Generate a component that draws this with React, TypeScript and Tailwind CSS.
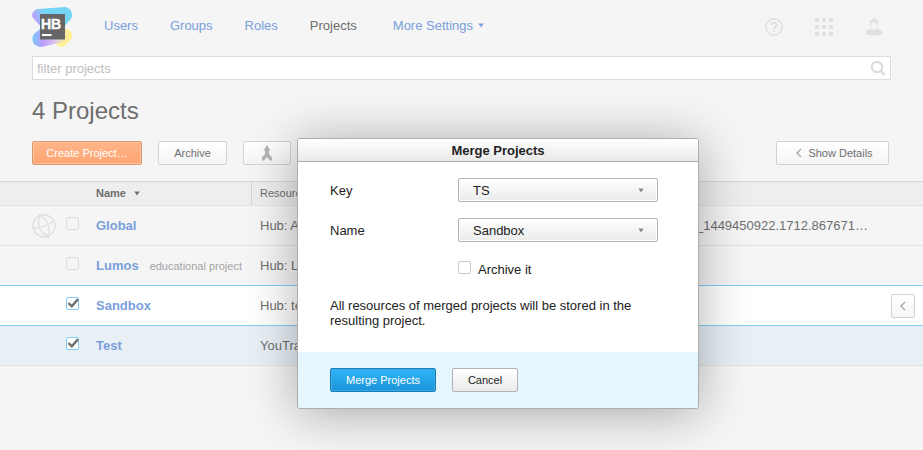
import React from "react";

const projects = [
  { name: "Global", note: "", resource: "Hub: All", extra: "_1449450922.1712.867671…", checked: false, global: true, focused: false },
  { name: "Lumos", note: "educational project", resource: "Hub: Lu", extra: "", checked: false, global: false, focused: false },
  { name: "Sandbox", note: "", resource: "Hub: test", extra: "", checked: true, global: false, focused: true },
  { name: "Test", note: "", resource: "YouTrack", extra: "", checked: true, global: false, focused: false },
];

function Logo() {
  return (
    <svg width="40" height="40" viewBox="0 0 40 40" role="img" aria-label="Hub">
      <defs>
        <linearGradient id="top" x1="0" y1="13" x2="13" y2="6" gradientUnits="userSpaceOnUse">
          <stop offset="0" stopColor="#c79bff" />
          <stop offset="0.4" stopColor="#a9b0fb" />
          <stop offset="1" stopColor="#75d5f5" />
        </linearGradient>
        <linearGradient id="bottom" x1="0" y1="28" x2="38" y2="30" gradientUnits="userSpaceOnUse">
          <stop offset="0" stopColor="#77c9fa" />
          <stop offset="0.3" stopColor="#bb9dfb" />
          <stop offset="0.6" stopColor="#dcc3ee" />
          <stop offset="0.85" stopColor="#fbeaa0" />
        </linearGradient>
      </defs>
      <path d="M28 24L36 23C40 23 41 29 39 32L33 38.500C31 40.300 28 40.300 26 38.500L22 34Z" fill="#fff192" />
      <path d="M8 22L2 27C-2 33 2 40 9 40L32 35C35 34 36 33 36 30V22Z" fill="url(#bottom)" />
      <path d="M6 2L33 0C40 1 42 9 38 13L31 21L9 20L2 12C-2 8 1 3 6 2Z" fill="url(#top)" />
      <rect x="8" y="7" width="25" height="25.500" fill="#666" />
      <text x="9" y="21.500" fontSize="14" fontWeight="700" fill="#fff" stroke="#fff" strokeWidth="0.400" fontFamily="Liberation Sans, sans-serif">HB</text>
      <rect x="10" y="27" width="9.500" height="2" fill="#fff" />
    </svg>
  );
}

function Caret({ className }: { className: string }) {
  return (
    <svg width="6" height="5" viewBox="0 0 6 5" className={className} aria-hidden="true">
      <path d="M0.300 0.500H5.700L3 4.500Z" fill="currentColor" />
    </svg>
  );
}

function ChevronLeft() {
  return (
    <svg width="6" height="10" viewBox="0 0 6 10" fill="none" stroke="#aaa" strokeWidth="1.4" aria-hidden="true">
      <path d="M5 1L1 5L5 9" />
    </svg>
  );
}

function Checkbox({ label, checked = false, id }: { label?: string; checked?: boolean; id?: string }) {
  return (
    <span className="inline-grid">
      <input
        id={id}
        type="checkbox"
        aria-label={label}
        defaultChecked={checked}
        className="peer col-start-1 row-start-1 size-[13px] appearance-none rounded-xs border border-[#dcdcdc] bg-transparent checked:border-[#80cdf7] checked:bg-white in-[form]:border-[#c8c8c8]"
      />
      <svg
        width="13"
        height="13"
        viewBox="0 0 13 13"
        fill="none"
        stroke="#6b6b6b"
        strokeWidth="2.4"
        className="pointer-events-none invisible col-start-1 row-start-1 peer-checked:visible"
        aria-hidden="true"
      >
        <path d="M2.5 6L5.800 9.300L12 2.300" />
      </svg>
    </span>
  );
}

function Field({ id, label, value, options }: { id: string; label: string; value: string; options: string[] }) {
  return (
    <div className="flex items-center">
      <label htmlFor={id} className="w-32">{label}</label>
      <div className="grid w-[200px] items-center">
        <select
          id={id}
          defaultValue={value}
          className="col-start-1 row-start-1 h-6 appearance-none rounded-xs border border-[#b3b3b3] bg-linear-to-b from-white to-[#ebebeb] pl-[14px] text-[#222] shadow-[inset_0_0_0_1px_#fff]"
        >
          {options.map((o) => <option key={o}>{o}</option>)}
        </select>
        <Caret className="pointer-events-none col-start-1 row-start-1 mr-[14px] justify-self-end text-[#8c8c8c]" />
      </div>
    </div>
  );
}

const lightButton =
  "flex h-6 items-center justify-center rounded-xs border border-[#d2d2d2] bg-linear-to-b from-white to-[#f5f5f5] text-[11px]";
const navLink = "text-[#7aa0dc]";

export default function App() {
  return (
    <div className="relative min-h-screen overflow-hidden bg-[#f5f5f5] font-['Liberation_Sans',Arial,sans-serif] text-[13px] leading-[15px] text-[#6e6e6e]">
      <header className="flex h-14 items-center pr-10 pb-[2px] pl-8">
        <Logo />
        <nav className="ml-8 flex flex-1 gap-8 pb-[3px]">
          <a href="#users" className={navLink}>Users</a>
          <a href="#groups" className={navLink}>Groups</a>
          <a href="#roles" className={navLink}>Roles</a>
          <a href="#projects" aria-current="page">Projects</a>
          <button type="button" className="ml-1 flex items-center gap-[5px] text-[#7aa0dc]">
            More Settings <Caret className="" />
          </button>
        </nav>
        <div className="flex items-center gap-8 text-[#dfdfdf]">
          <button type="button" aria-label="Help">
            <svg width="18" height="18" viewBox="0 0 18 18" fill="none" stroke="currentColor">
              <circle cx="9" cy="9" r="8.2" strokeWidth="1.6" />
              <path d="M6.4 7.2C6.4 3.9 11.7 3.9 11.7 7C11.7 9 9.1 8.8 9.1 11.2" strokeWidth="1.9" />
              <path d="M9.1 12.2V14" strokeWidth="2" />
            </svg>
          </button>
          <button type="button" aria-label="Services">
            <svg width="18" height="18" viewBox="0 0 18 18" fill="currentColor">
              <path d="M0 0h4v4H0zM7 0h4v4H7zM14 0h4v4h-4zM0 7h4v4H0zM7 7h4v4H7zM14 7h4v4h-4zM0 14h4v4H0zM7 14h4v4H7zM14 14h4v4h-4z" />
            </svg>
          </button>
          <button type="button" aria-label="Profile">
            <svg width="18" height="18" viewBox="0 0 18 18">
              <path d="M1 15C1 12 3.500 11 6 11L9 12.500L12 11C14.500 11 17 12 17 15C17 17.500 13 17.200 9 17.200C5 17.200 1 17.500 1 15Z" fill="currentColor" />
              <path d="M5.3 5C5.3 2.3 6.7 1.2 9 1.2C11.3 1.2 12.7 2.3 12.7 5C12.7 8 11 11.500 9 11.500C7 11.500 5.3 8 5.3 5Z" fill="#f5f5f5" stroke="currentColor" />
              <path d="M5 6C4.700 2 6.500 1 9 1C11.5 1 13.300 2 13 6C12.2 4.5 11 4.8 9 4.6C7 4.8 5.8 4.5 5 6Z" fill="currentColor" />
            </svg>
          </button>
        </div>
      </header>

      <main>
        <div className="mx-8 flex h-6 items-center border border-[#dcdcdc] bg-white pr-1">
          <input
            type="text"
            aria-label="Filter projects"
            placeholder="filter projects"
            className="min-w-0 flex-1 pl-1 outline-none placeholder:text-[#bebebe]"
          />
          <button type="button" aria-label="Search">
            <svg width="16" height="16" viewBox="0 0 16 16" fill="none" stroke="#dcdcdc">
              <circle cx="7" cy="7" r="5.2" strokeWidth="2.2" />
              <path d="M10.8 10.8L14.8 14.8" strokeWidth="2.6" />
            </svg>
          </button>
        </div>

        <h1 className="mx-8 mt-4 text-2xl leading-[30px]">4 Projects</h1>

        <div className="mt-[15px] flex gap-4 pr-[34px] pl-8">
          <button type="button" className="h-6 w-[110px] rounded-xs border border-[#d99a72] bg-linear-to-b from-[#ffb588] to-[#ffa473] text-[11px] text-white shadow-[inset_0_0_0_1px_#ffc09a]">
            Create Project…
          </button>
          <button type="button" className={`${lightButton} w-[69px]`}>Archive</button>
          <button type="button" aria-label="Merge" className={`${lightButton} w-12`}>
            <svg width="12" height="16" viewBox="0 0 12 16" fill="#b4b4b4">
              <path d="M6 0L9.500 5.500H8V9L11 12.500V15.500H9L6 12L3 15.500H1V12.500L4 9V5.500H2.500Z" />
            </svg>
          </button>
          <button type="button" className={`${lightButton} ml-auto w-[113px] gap-[6px] pl-1`}>
            <ChevronLeft /> Show Details
          </button>
        </div>

        <table className="mt-4 w-full table-fixed border-separate border-spacing-0">
          <colgroup>
            <col className="w-24" />
            <col className="w-[155px]" />
            <col />
            <col className="w-8" />
          </colgroup>
          <thead>
            <tr className="h-6 bg-[#eeeeee] text-left text-[11px] leading-[13px] *:border-t *:border-[#d6d6d6] *:p-0">
              <td></td>
              <th scope="col">
                <span className="flex items-center gap-2">Name <Caret className="" /></span>
              </th>
              <th scope="col" className="font-normal">
                <span className="flex h-[23px] items-center border-l border-[#d6d6d6] pl-2">Resources</span>
              </th>
              <td></td>
            </tr>
          </thead>
          <tbody>
            {projects.map((p) => (
              <tr
                key={p.name}
                className={
                  p.focused
                    ? "h-10 bg-white *:border-t *:border-[#80cdf7] *:p-0"
                    : p.checked
                      ? "h-[41px] bg-[#e8f0f6] *:border-y *:border-t-[#80cdf7] *:border-b-[#e2e2e2] *:p-0"
                      : "h-10 *:border-t *:border-[#e2e2e2] *:p-0"
                }
              >
                <td>
                  <div className="flex items-center justify-end pr-[17px]">
                    {p.global && (
                      <svg width="24" height="24" viewBox="0 0 24 24" fill="none" stroke="#dfdfdf" strokeWidth="1.3" className="mr-[10px]" aria-hidden="true">
                        <circle cx="12" cy="12" r="11" />
                        <path d="M8 1.5C4 9 8 19 16 22M8 1.5C15 5 19 14 16 22M1.5 14.5C8 14 15 11 21.5 7.5" />
                        <circle cx="8" cy="1.8" r="1.2" fill="#dfdfdf" />
                        <circle cx="16" cy="22" r="1.2" fill="#dfdfdf" />
                      </svg>
                    )}
                    <span className="flex pb-1">
                      <Checkbox label={`Select ${p.name}`} checked={p.checked} />
                    </span>
                  </div>
                </td>
                <td className="whitespace-nowrap">
                  <a href="#project" className="font-bold text-[#7aa0dc]">{p.name}</a>
                  {p.note && <span className="ml-[11px] text-[11px] text-[#a3a3a3]">{p.note}</span>}
                </td>
                <td>
                  <div className="flex justify-between pr-[23px] pl-[9px]">
                    <span>{p.resource}</span>
                    <span>{p.extra}</span>
                  </div>
                </td>
                <td>
                  {p.focused && (
                    <button type="button" aria-label="Show project details" className={`${lightButton} w-6`}>
                      <ChevronLeft />
                    </button>
                  )}
                </td>
              </tr>
            ))}
          </tbody>
        </table>
      </main>

      <section
        role="dialog"
        aria-labelledby="merge-title"
        className="absolute top-[138px] left-[297px] w-[402px] overflow-hidden rounded-[3px] border border-[#adadad] bg-white text-[#222] shadow-[0_4px_50px_rgba(0,0,0,0.32)]"
      >
        <h2 id="merge-title" className="border-b border-[#adadad] bg-linear-to-b from-white to-[#e9e9e9] pt-1 pb-[3px] text-center font-bold">
          Merge Projects
        </h2>
        <form>
          <div className="flex flex-col gap-4 px-8 pt-4 pb-6">
            <Field id="key" label="Key" value="TS" options={["TS", "SB"]} />
            <Field id="name" label="Name" value="Sandbox" options={["Sandbox", "Test"]} />
            <div className="ml-32 flex h-6 items-start gap-[7px] pt-[3px]">
              <Checkbox id="archive" />
              <label htmlFor="archive" className="pt-px">Archive it</label>
            </div>
            <p>All resources of merged projects will be stored in the resulting project.</p>
          </div>
          <div className="flex gap-4 bg-[#e6f6fe] px-8 py-4">
            <button type="button" className="h-6 w-[106px] rounded-xs border border-[#147fb8] bg-linear-to-b from-[#2fb5f8] to-[#1c93d8] text-[11px] text-white shadow-[inset_0_0_0_1px_#3fa9e3]">
              Merge Projects
            </button>
            <button type="button" className="h-6 w-[66px] rounded-xs border border-[#b3b3b3] bg-linear-to-b from-white to-[#ebebeb] text-[11px]">
              Cancel
            </button>
          </div>
        </form>
      </section>
    </div>
  );
}
